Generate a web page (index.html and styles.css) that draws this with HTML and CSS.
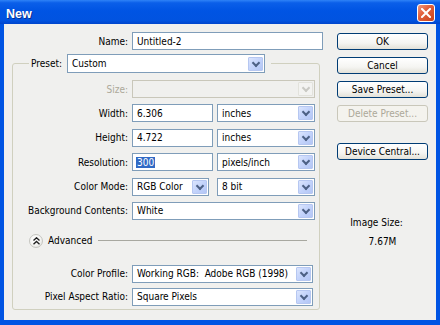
FILE: index.html
```html
<!DOCTYPE html>
<html lang="en">
<head>
    <meta charset="UTF-8">
    <title>New</title>
    <link rel="stylesheet" href="styles.css">
</head>
<body>
    <div class="window">
        <!-- title bar -->
        <div class="titlebar">
            <span class="title">New</span>
            <div class="close">
                <svg width="10" height="10" viewBox="0 0 10 10"><path d="M1 1 L9 9 M9 1 L1 9" stroke="#fff" stroke-width="2" stroke-linecap="square"/></svg>
            </div>
        </div>

        <div class="content">
            <div class="main">
                <div class="row">
                    <span class="label outer">Name:</span>
                    <div class="field name">Untitled-2</div>
                </div>

                <fieldset class="group">
                    <legend>
                        <span class="legend-label">Preset:</span>
                        <div class="select preset"><span>Custom</span><i class="arrow"></i></div>
                    </legend>

                    <div class="row first">
                        <span class="label disabled">Size:</span>
                        <div class="select wide disabled"><span></span><i class="arrow"></i></div>
                    </div>
                    <div class="row">
                        <span class="label">Width:</span>
                        <div class="pair">
                            <div class="field num">6.306</div>
                            <div class="select unit"><span>inches</span><i class="arrow"></i></div>
                        </div>
                    </div>
                    <div class="row">
                        <span class="label">Height:</span>
                        <div class="pair">
                            <div class="field num">4.722</div>
                            <div class="select unit"><span>inches</span><i class="arrow"></i></div>
                        </div>
                    </div>
                    <div class="row">
                        <span class="label">Resolution:</span>
                        <div class="pair">
                            <div class="field num"><span class="selected">300</span></div>
                            <div class="select unit"><span>pixels/inch</span><i class="arrow"></i></div>
                        </div>
                    </div>
                    <div class="row">
                        <span class="label">Color Mode:</span>
                        <div class="pair">
                            <div class="select mode"><span>RGB Color</span><i class="arrow"></i></div>
                            <div class="select unit"><span>8 bit</span><i class="arrow"></i></div>
                        </div>
                    </div>
                    <div class="row">
                        <span class="label">Background Contents:</span>
                        <div class="select wide"><span>White</span><i class="arrow"></i></div>
                    </div>

                    <div class="advanced">
                        <div class="toggle">
                            <svg width="7" height="8" viewBox="0 0 7 8"><path d="M0.5 3.5 L3.5 0.8 L6.5 3.5 M0.5 7.2 L3.5 4.5 L6.5 7.2" fill="none" stroke="#222" stroke-width="1.4"/></svg>
                        </div>
                        <span>Advanced</span>
                        <div class="rule"></div>
                    </div>

                    <div class="row profile">
                        <span class="label">Color Profile:</span>
                        <div class="select long"><span>Working RGB:&nbsp; Adobe RGB (1998)</span><i class="arrow"></i></div>
                    </div>
                    <div class="row">
                        <span class="label">Pixel Aspect Ratio:</span>
                        <div class="select long"><span>Square Pixels</span><i class="arrow"></i></div>
                    </div>
                </fieldset>
            </div>

            <!-- buttons -->
            <div class="side">
                <div class="btn">OK</div>
                <div class="btn">Cancel</div>
                <div class="btn">Save Preset...</div>
                <div class="btn off">Delete Preset...</div>
                <div class="btn device">Device Central...</div>
                <div class="info-label">Image Size:</div>
                <div class="info-value">7.67M</div>
            </div>
        </div>
    </div>
</body>
</html>
```

FILE: styles.css
```css
* {
    margin: 0;
    padding: 0;
    box-sizing: border-box;
}

body {
    background: #fff;
    font-family: "DejaVu Sans", Tahoma, sans-serif;
    font-stretch: condensed;
    font-size: 10px;
    color: #000;
}

.window {
    width: 440px;
    height: 325px;
    display: flex;
    flex-direction: column;
    background: #0054e3;
}

/* title bar */
.titlebar {
    height: 24px;
    display: flex;
    align-items: center;
    padding: 0 5px 0 6px;
    background: linear-gradient(#2f83f7 0%, #0b5fe9 12%, #0054e3 45%, #0153e0 85%, #0045cc 100%);
}

.title {
    font-family: "Liberation Sans", Arial, sans-serif;
    font-stretch: normal;
    font-weight: bold;
    font-size: 12.5px;
    color: #fff;
    margin-top: 3px;
    text-shadow: 1px 1px 0 #0a2f8c;
}

.close {
    margin-left: auto;
    margin-top: 2px;
    width: 18px;
    height: 18px;
    border: 1px solid #fff;
    border-radius: 3px;
    background: linear-gradient(135deg, #f09a80 0%, #e2613d 40%, #c8431b 100%);
    display: flex;
    align-items: center;
    justify-content: center;
}

/* dialog body */
.content {
    flex: 1;
    display: flex;
    margin: 0 4px 5px 4px;
    background: #f0f0ee;
}

.main {
    width: 319px;
    padding: 8px 0 0 8px;
}

.row {
    display: flex;
    align-items: center;
    height: 18px;
    margin-top: 6.4px;
}

.row.first {
    margin-top: 0;
}

.label {
    width: 119px;
    text-align: right;
    padding-right: 4px;
    white-space: nowrap;
}

.label.outer {
    width: 120px;
}

.label.disabled {
    color: #aca899;
}

.main > .row {
    margin-top: 0;
}

.field,
.select {
    height: 18px;
    border: 1px solid #7f9db9;
    background: #fff;
    display: flex;
    align-items: center;
    padding-left: 4px;
    white-space: nowrap;
}

.name {
    width: 191px;
}

.pair {
    width: 183px;
    display: flex;
    justify-content: space-between;
}

.num {
    width: 81px;
}

.selected {
    background: #316ac5;
    color: #fff;
    padding: 0 1px;
    margin-left: -1px;
}

.select span {
    flex: 1;
}

.arrow {
    width: 15px;
    height: 14px;
    margin-right: 1px;
    border: 1px solid #b6c7f1;
    border-radius: 1px;
    background: linear-gradient(135deg, #dbe5fd 0%, #c3d3fb 50%, #b3c6f5 100%) ;
    position: relative;
}

.arrow::after {
    content: "";
    position: absolute;
    left: 4px;
    top: 2px;
    width: 4px;
    height: 4px;
    border-right: 2px solid #4d6185;
    border-bottom: 2px solid #4d6185;
    transform: rotate(45deg);
}

.select.disabled {
    background: #f0f0ee;
    border-color: #c9c7ba;
}

.select.disabled .arrow {
    background: #f3f3f1;
    border-color: #e2e2dc;
}

.select.disabled .arrow::after {
    border-color: #c9c9c4;
}

.preset {
    width: 198px;
    height: 19px;
}

.unit {
    width: 98px;
}

.mode {
    width: 77px;
}

.wide {
    width: 183px;
}

.long {
    width: 181px;
}

/* preset group */
.group {
    width: 308px;
    margin-top: 4px;
    border: 1px solid #d0d0bf;
    border-radius: 3px;
    padding: 7px 0 3px 0;
}

.group legend {
    margin-left: 16px;
    padding: 0 6px 0 2px;
    display: flex;
    align-items: center;
}

.legend-label {
    width: 36px;
}

.advanced {
    display: flex;
    align-items: center;
    height: 14px;
    margin: 14px 12px 0 16px;
}

.toggle {
    width: 14px;
    height: 14px;
    border-radius: 50%;
    border: 1px solid #c5c5c0;
    background: radial-gradient(circle at 40% 35%, #fff 0%, #f4f4f2 55%, #d9d9d4 100%);
    display: flex;
    align-items: center;
    justify-content: center;
    margin-right: 5px;
}

.rule {
    flex: 1;
    height: 1px;
    margin-left: 6px;
    background: #a8a8a0;
}

.row.profile {
    margin-top: 17px;
}

.profile + .row {
    margin-top: 5px;
}

/* buttons column */
.side {
    width: 91px;
    margin-left: 14px;
    padding-top: 9px;
    display: flex;
    flex-direction: column;
}

.btn {
    height: 17px;
    margin-bottom: 7px;
    border: 1px solid #003c74;
    border-radius: 3px;
    background: linear-gradient(#ffffff 0%, #f5f5f2 60%, #e3e1d8 100%);
    display: flex;
    align-items: center;
    justify-content: center;
}

.btn.off {
    border-color: #c9c7ba;
    color: #aca899;
    background: #f4f3ee;
}

.btn.device {
    margin-top: 14px;
}

.info-label {
    margin-top: 49px;
    text-align: center;
    padding-right: 12px;
    line-height: 13px;
}

.info-value {
    margin-top: 6px;
    text-align: center;
    line-height: 13px;
}
```
